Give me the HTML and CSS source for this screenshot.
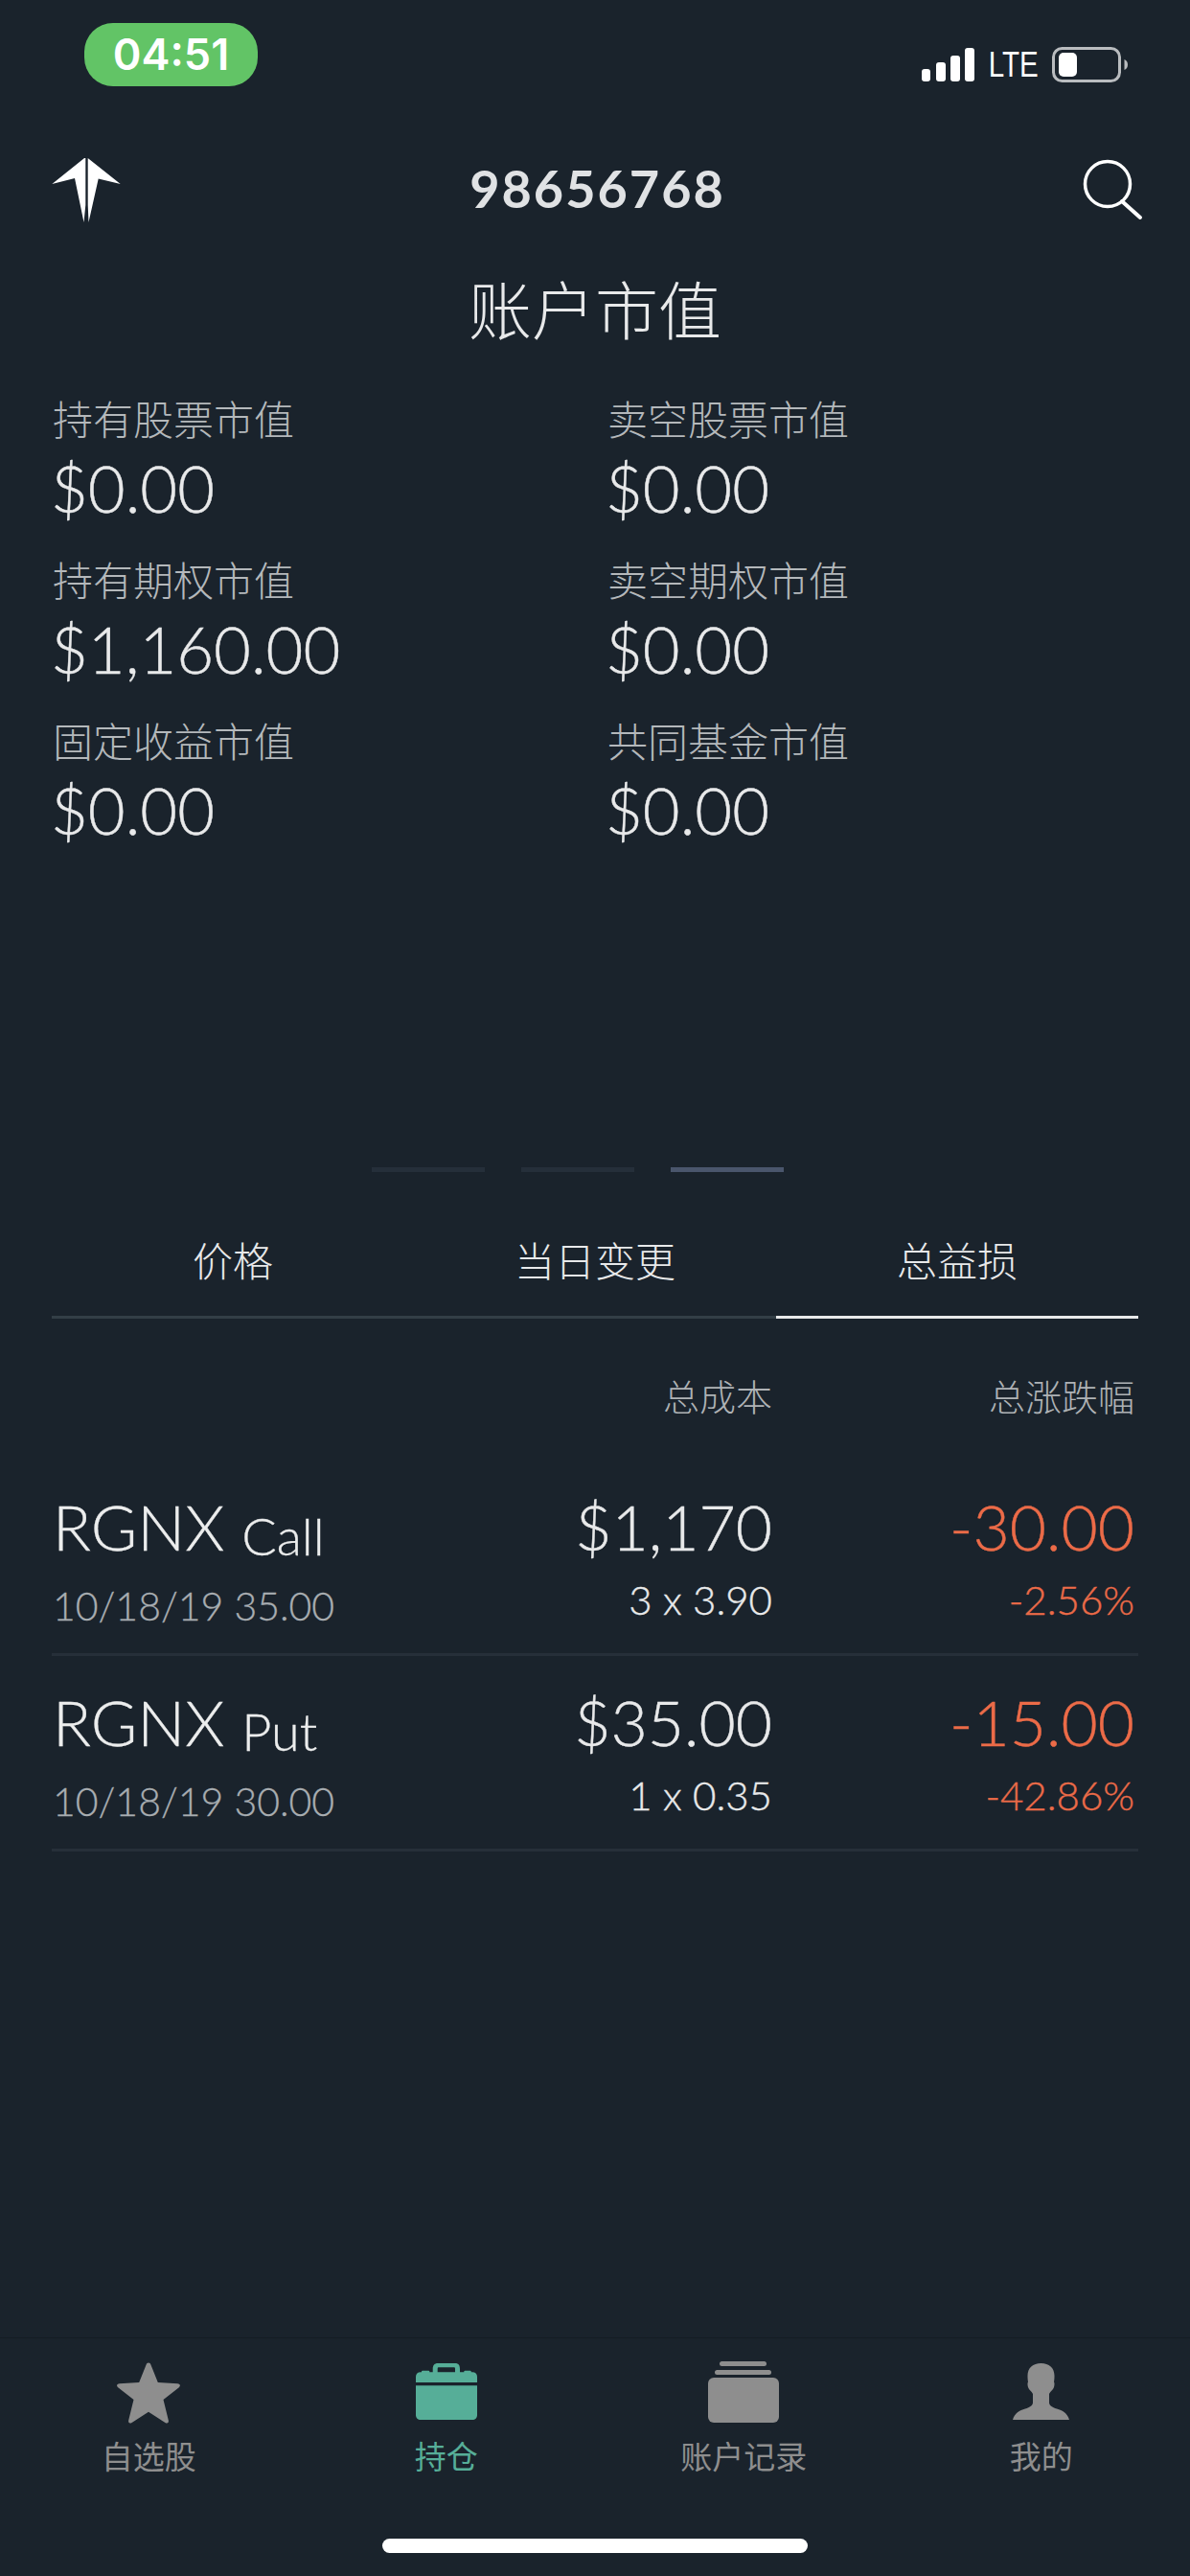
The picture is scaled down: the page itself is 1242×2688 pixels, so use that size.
FILE: index.html
```html
<!DOCTYPE html>
<html lang="zh-CN">
<head>
    <meta charset="UTF-8">
    <meta name="viewport" content="width=device-width, initial-scale=1.0">
    <title>账户市值</title>
    <link rel="stylesheet" href="styles.css">
</head>
<body>
    <div class="page">
        <div class="status-bar">
            <div class="time-pill">04:51</div>
            <div class="status-icons">
                <svg class="signal" width="55" height="35" viewBox="0 0 55 35">
                    <rect x="0" y="22" width="9" height="13" rx="3"/>
                    <rect x="15" y="15" width="10" height="20" rx="3"/>
                    <rect x="30" y="8" width="10" height="27" rx="3"/>
                    <rect x="45" y="0" width="10" height="35" rx="3"/>
                </svg>
                <span class="lte">LTE</span>
                <svg class="battery" width="79" height="37" viewBox="0 0 79 37">
                    <rect x="1.500" y="1.500" width="69" height="34" rx="9" fill="none" stroke="#b9bcbf" stroke-width="3"/>
                    <rect x="7" y="6" width="19" height="25" rx="5" fill="#fff"/>
                    <path d="M75.500 13c2.500 1 3.500 3 3.500 5.500s-1 4.500-3.500 5.500z" fill="#b9bcbf"/>
                </svg>
            </div>
        </div>

        <div class="top-bar">
            <svg class="logo" width="72" height="69" viewBox="0 0 72 69">
                <path d="M34 1L0.300 28L24 22L33.500 68L35.300 50L35.300 1z"/>
                <path d="M37.700 1L71.700 28L48.700 22.500L38.500 68L37.700 50z"/>
            </svg>
            <div class="account-no">98656768</div>
            <svg class="search" width="64" height="66" viewBox="0 0 64 66">
                <circle cx="27" cy="27" r="23.500" fill="none" stroke="#fff" stroke-width="3.500"/>
                <path d="M42 45L61 62" fill="none" stroke="#fff" stroke-width="4" stroke-linecap="round"/>
            </svg>
        </div>

        <h1 class="page-title">账户市值</h1>

        <div class="summary">
            <div class="summary-item"><div class="summary-label">持有股票市值</div><div class="summary-value">$0.00</div></div>
            <div class="summary-item"><div class="summary-label">卖空股票市值</div><div class="summary-value">$0.00</div></div>
            <div class="summary-item"><div class="summary-label">持有期权市值</div><div class="summary-value">$1,160.00</div></div>
            <div class="summary-item"><div class="summary-label">卖空期权市值</div><div class="summary-value">$0.00</div></div>
            <div class="summary-item"><div class="summary-label">固定收益市值</div><div class="summary-value">$0.00</div></div>
            <div class="summary-item"><div class="summary-label">共同基金市值</div><div class="summary-value">$0.00</div></div>
        </div>

        <div class="pager">
            <span class="dash"></span>
            <span class="dash"></span>
            <span class="dash active"></span>
        </div>

        <div class="tabs">
            <div class="tab">价格</div>
            <div class="tab">当日变更</div>
            <div class="tab active">总益损</div>
        </div>

        <div class="col-head">
            <span class="col-cost">总成本</span>
            <span class="col-change">总涨跌幅</span>
        </div>

        <div class="position first">
            <div class="pos-name">
                <div class="pos-symbol">RGNX <small>Call</small></div>
                <div class="pos-sub">10/18/19 35.00</div>
            </div>
            <div class="pos-cost">
                <div class="pos-big">$1,170</div>
                <div class="pos-small">3 x 3.90</div>
            </div>
            <div class="pos-change">
                <div class="pos-big">-30.00</div>
                <div class="pos-small">-2.56%</div>
            </div>
        </div>
        <div class="position">
            <div class="pos-name">
                <div class="pos-symbol">RGNX <small>Put</small></div>
                <div class="pos-sub">10/18/19 30.00</div>
            </div>
            <div class="pos-cost">
                <div class="pos-big">$35.00</div>
                <div class="pos-small">1 x 0.35</div>
            </div>
            <div class="pos-change">
                <div class="pos-big">-15.00</div>
                <div class="pos-small">-42.86%</div>
            </div>
        </div>

        <div class="tab-bar">
            <div class="nav-item">
                <svg width="70" height="66" viewBox="0 0 70 66">
                    <path d="M35 1.500c1.300 0 2 .8 2.500 2.200l7.300 18.300 20.500 1.300c2.800.2 3.500 2.200 1.500 3.900L50.500 40l5.300 21.500c.6 2.700-1.200 3.900-3.400 2.500L35 52.700 17.600 64c-2.200 1.400-4 .2-3.400-2.500L19.500 40 3.200 27.200c-2-1.700-1.300-3.700 1.500-3.900L25.200 22l7.300-18.300c.5-1.400 1.200-2.200 2.500-2.200z"/>
                </svg>
                <span>自选股</span>
            </div>
            <div class="nav-item current">
                <svg width="64" height="62" viewBox="0 -2 64 62">
                    <path fill-rule="evenodd" d="M0 20V14C0 11 2 9.300 5 9.300H6V8.500Q6 7.700 7 7.700H13.300Q14.300 7.700 14.300 8.500V9.300H17.700V6C17.700 2 19.500 0 23 0H41C44.500 0 46 2 46 6V9.300H50.300V8.500Q50.300 7.700 51.300 7.700H56.700Q57.700 7.700 57.700 8.500V9.300H59C62 9.300 64 11 64 14V20ZM22.700 9.300H41V5.500Q41 4.300 40 4.300H23.700Q22.700 4.300 22.700 5.500Z"/>
                    <path d="M0 23.300H64V54C64 57 62 59 59 59H5C2 59 0 57 0 54Z"/>
                </svg>
                <span>持仓</span>
            </div>
            <div class="nav-item">
                <svg width="74" height="64" viewBox="0 0 74 64">
                    <rect x="12" y="0" width="49" height="5" rx="2.500"/>
                    <rect x="7" y="9" width="59" height="5" rx="2.500"/>
                    <rect x="0" y="17" width="74" height="47" rx="6"/>
                </svg>
                <span>账户记录</span>
            </div>
            <div class="nav-item">
                <svg width="60" height="62" viewBox="0 -2 60 62">
                    <path d="M29.500 0C38 0 43.500 5 43.500 13C43.500 16 43.300 18 43 19.500C43.800 20.500 43.500 23 43 25C42 28 39.500 29 38 32V41C38 44 41 46 46 47.500C52 49 57 52 59 59H0C2 52 7 49 13 47.500C18 46 21 44 21 41V32C19.500 29 17 28 16 25C15.500 23 15.200 20.500 16 19.500C15.700 18 15.500 16 15.500 13C15.500 5 21 0 29.500 0Z"/>
                </svg>
                <span>我的</span>
            </div>
        </div>

        <div class="home-bar"></div>
    </div>
</body>
</html>
```

FILE: styles.css
```css
* {
    box-sizing: border-box;
}

body {
    margin: 0;
    background-color: #1a232c;
    font-family: Lato, "Noto Sans CJK SC", sans-serif;
    font-weight: 300;
    color: #e8e9ea;
}

.page {
    width: 1242px;
    height: 2688px;
    overflow: hidden;
    display: flex;
    flex-direction: column;
}

/* Status bar */
.status-bar {
    height: 150px;
    display: flex;
    justify-content: space-between;
    align-items: flex-start;
    padding: 24px 65px 0 88px;
}

.time-pill {
    width: 181px;
    height: 66px;
    border-radius: 30px;
    background: #62c466;
    color: white;
    font-family: Inter, sans-serif;
    font-size: 45px;
    font-weight: 600;
    line-height: 66px;
    text-align: center;
}

.status-icons {
    display: flex;
    align-items: center;
    gap: 15px;
    margin-top: 25px;
}

.signal {
    fill: white;
}

.lte {
    font-family: "Liberation Sans", sans-serif;
    font-weight: 400;
    font-size: 36px;
    line-height: 37px;
    color: white;
    transform: scaleX(0.82);
    margin: 0 -6px;
}

/* Header */
.top-bar {
    height: 80px;
    margin-top: 8px;
    display: grid;
    grid-template-columns: 1fr auto 1fr;
    align-items: center;
    padding: 0 49px 0 54px;
}

.logo {
    fill: white;
}

.search {
    justify-self: end;
}

.account-no {
    font-size: 54px;
    font-weight: 700;
    letter-spacing: 2px;
    color: #e0e2e4;
    line-height: 76px;
    margin-bottom: 3px;
}

.page-title {
    margin: 46px 0 0;
    height: 80px;
    font-size: 66px;
    line-height: 80px;
    font-weight: 300;
    text-align: center;
}

/* Market value grid */
.summary {
    display: grid;
    grid-template-columns: 579px 1fr;
    grid-auto-rows: 168px;
    padding-left: 55px;
    margin-top: 45px;
}

.summary-label {
    font-size: 42px;
    line-height: 58px;
    color: #b4b8bb;
}

.summary-value {
    font-size: 67px;
    line-height: 84px;
    color: #e8e9ea;
    margin-left: -2px;
    -webkit-text-stroke: 0.4px #e8e9ea;
}

.pager {
    display: flex;
    justify-content: center;
    gap: 38px;
    margin-top: 305px;
    padding-right: 36px;
}

.dash {
    width: 118px;
    height: 5px;
    background: #252f3a;
}

.dash.active {
    background: #4a566c;
}

/* Tabs */
.tabs {
    display: grid;
    grid-template-columns: repeat(3, 1fr);
    margin: 49px 54px 0;
}

.tab {
    height: 104px;
    border-bottom: 3px solid #333e46;
    font-size: 42px;
    line-height: 88px;
    text-align: center;
    color: #e8e9ea;
}

.tab.active {
    border-bottom-color: #e8e9ea;
}

.col-head {
    display: grid;
    grid-template-columns: 470px 282px 378px;
    margin: 54px 54px 0;
    font-size: 38px;
    line-height: 54px;
    color: #aeb2b5;
}

.col-cost {
    grid-column: 2;
    text-align: right;
}

.col-change {
    text-align: right;
}

/* Positions */
.position {
    display: grid;
    grid-template-columns: 470px 282px 378px;
    height: 204px;
    margin: 0 54px;
    border-bottom: 3px solid #262f39;
    padding-top: 24px;
}

.position.first {
    margin-top: 40px;
}

.pos-symbol {
    font-size: 66px;
    line-height: 90px;
    color: #eceded;
    padding-left: 1px;
    -webkit-text-stroke: 0.3px #eceded;
}

.pos-symbol small {
    font-size: 54px;
    vertical-align: -5px;
}

.pos-sub {
    font-size: 41px;
    line-height: 50px;
    margin-top: 3px;
    color: #a8adb1;
    padding-left: 1px;
    -webkit-text-stroke: 0.3px #a8adb1;
}

.pos-cost,
.pos-change {
    text-align: right;
    -webkit-text-stroke: 0.4px currentColor;
}

.pos-big {
    font-size: 66px;
    line-height: 90px;
}

.pos-small {
    font-size: 42px;
    line-height: 50px;
    margin-top: 6px;
}

.pos-change {
    color: #ec6b48;
}

/* Bottom navigation */
.tab-bar {
    margin-top: auto;
    display: grid;
    grid-template-columns: repeat(4, 1fr);
    height: 210px;
    padding-top: 24px;
    border-top: 1px solid #151c24;
}

.nav-item {
    display: flex;
    flex-direction: column;
    align-items: center;
    height: 118px;
    justify-content: space-between;
    fill: #8e8e8e;
    color: #8e8e8e;
    font-family: "Noto Sans CJK SC", sans-serif;
    font-weight: 400;
    font-size: 33px;
    line-height: 40px;
}

.nav-item.current {
    fill: #56ae98;
    color: #56ae98;
}

.home-bar {
    width: 444px;
    height: 15px;
    border-radius: 8px;
    background: white;
    margin: 0 auto 24px;
}
```
